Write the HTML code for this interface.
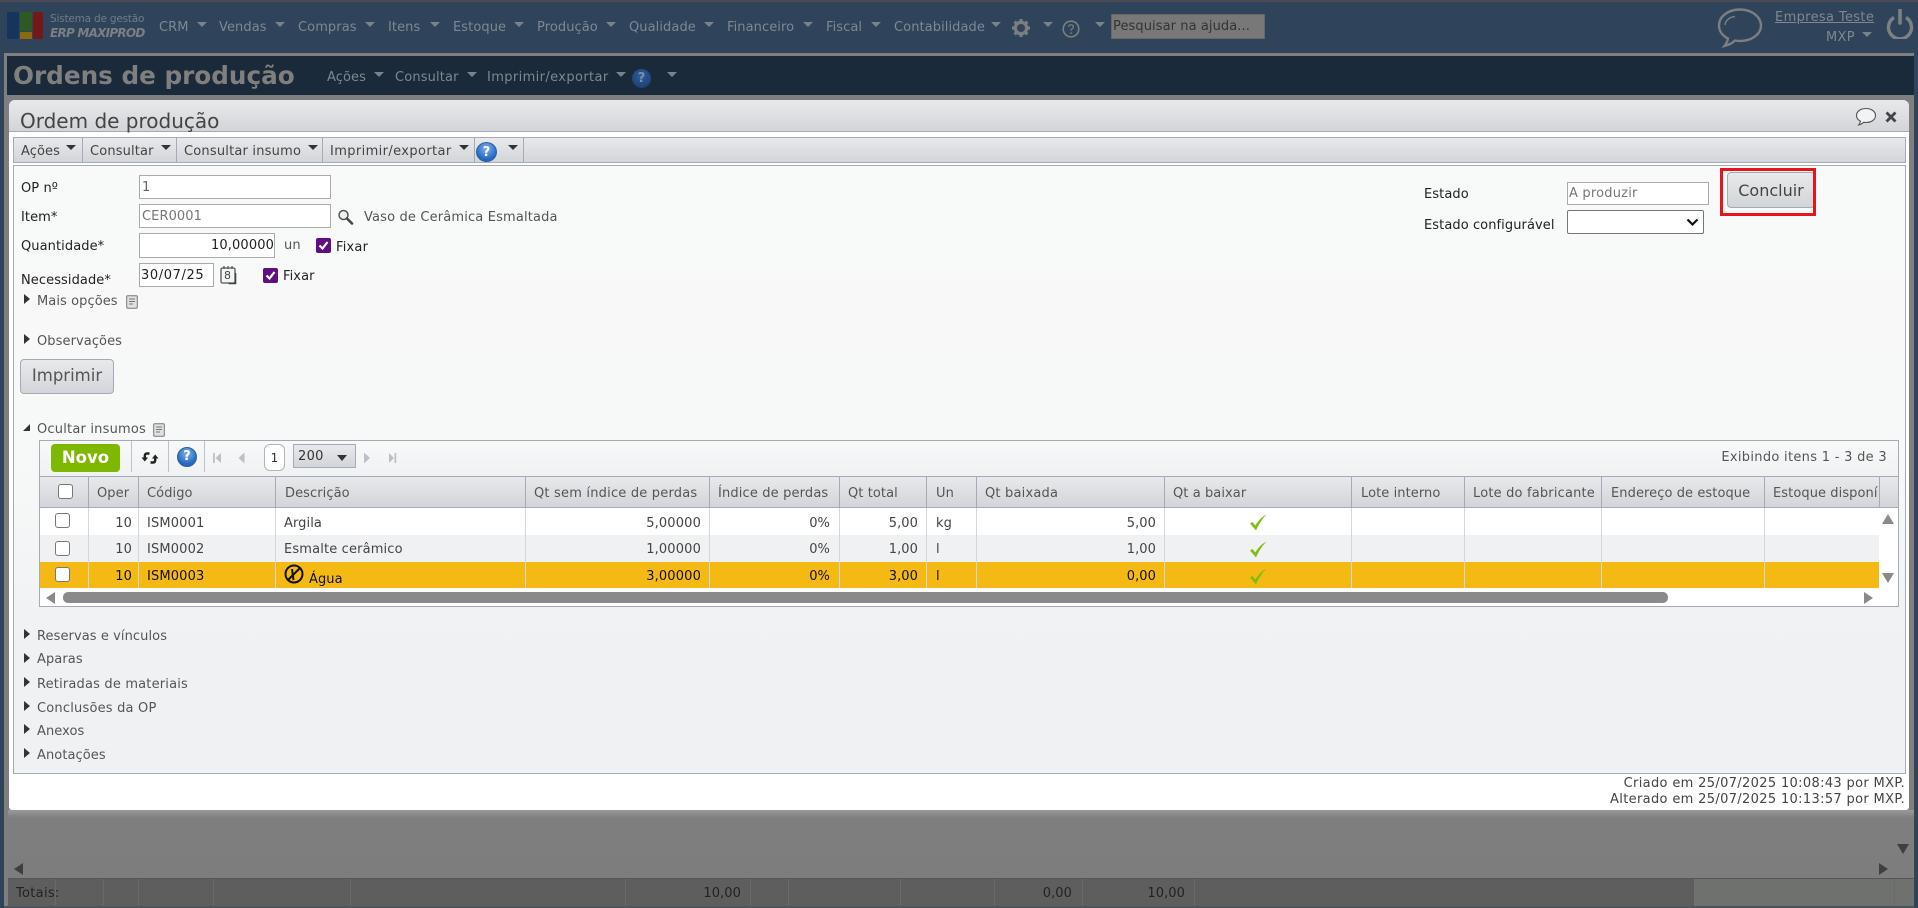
<!DOCTYPE html>
<html lang="pt"><head><meta charset="utf-8"><title>Ordem de produção</title>
<style>
html,body{margin:0;padding:0;width:1918px;height:908px;overflow:hidden;background:#2f435b}
body{position:relative;font:13px/16px "DejaVu Sans",sans-serif;color:#444;letter-spacing:.08px}
div,span,i,svg,input{position:absolute;box-sizing:border-box}
.t{white-space:nowrap;height:16px}
.m{color:#7d8892}
.d{width:0;height:0;border-left:5px solid transparent;border-right:5px solid transparent;border-top:5px solid #333}
.dm{border-top-color:#78838d}
.r{width:0;height:0;border-top:5px solid transparent;border-bottom:5px solid transparent;border-left:6px solid #333}
.v{width:1px;background:#a3abb8}
.h{color:#555}
.c{width:15px;height:15px;background:#fff;border:1px solid #777;border-radius:3px}
.g{background:linear-gradient(#e8e9eb,#d2d5d9)}
.cb{width:15px;height:15px;background:#5f0f82;border-radius:2px}
.tv{width:1px;background:#6a6a6a}
</style></head><body>

<!-- Background frame -->
<div style="left:0;top:0;width:1918px;height:2px;background:#4a4a55"></div>
<div style="left:4px;top:53px;width:1910px;height:855px;background:#7f7f7f"></div>
<div style="left:7px;top:56px;width:1907px;height:39px;background:#1a2a3a"></div>
<div style="left:8px;top:810px;width:1906px;height:68px;background:linear-gradient(#999,#7e7e7e 8px,#7d7d7d)"></div>

<!-- Logo -->
<div style="left:7px;top:12px;width:12px;height:27px;background:#17345c;border-radius:2px"></div>
<div style="left:20px;top:12px;width:12px;height:19px;background:#2c5a22"></div>
<div style="left:20px;top:32px;width:12px;height:7px;background:#8a6a10"></div>
<div style="left:33px;top:12px;width:10px;height:27px;background:#741818;border-radius:2px"></div>
<span class="t" style="left:50px;top:11px;font-size:10.500px;color:#717c86;letter-spacing:-.2px">Sistema de gestão</span>
<span class="t" style="left:50px;top:25px;font-size:12px;font-weight:bold;font-style:italic;color:#7a7f84;letter-spacing:-.75px">ERP MAXIPROD</span>

<!-- Main menu -->
<span class="t m" style="left:159px;top:20px">CRM</span><i class="d dm" style="left:197px;top:22px"></i>
<span class="t m" style="left:219px;top:20px">Vendas</span><i class="d dm" style="left:275px;top:22px"></i>
<span class="t m" style="left:298px;top:20px">Compras</span><i class="d dm" style="left:365px;top:22px"></i>
<span class="t m" style="left:388px;top:20px">Itens</span><i class="d dm" style="left:430px;top:22px"></i>
<span class="t m" style="left:453px;top:20px">Estoque</span><i class="d dm" style="left:514px;top:22px"></i>
<span class="t m" style="left:537px;top:20px">Produção</span><i class="d dm" style="left:606px;top:22px"></i>
<span class="t m" style="left:629px;top:20px">Qualidade</span><i class="d dm" style="left:704px;top:22px"></i>
<span class="t m" style="left:727px;top:20px">Financeiro</span><i class="d dm" style="left:803px;top:22px"></i>
<span class="t m" style="left:826px;top:20px">Fiscal</span><i class="d dm" style="left:871px;top:22px"></i>
<span class="t m" style="left:894px;top:20px">Contabilidade</span><i class="d dm" style="left:991px;top:22px"></i>
<svg style="left:1011px;top:18px" width="20" height="20" viewBox="0 0 20 20"><g stroke="#7a7f80" stroke-width="3.2"><path d="M10 1v18M1 10h18M3.6 3.6l12.8 12.8M16.4 3.6L3.6 16.4"/></g><circle cx="10" cy="10" r="6" fill="none" stroke="#7a7f80" stroke-width="2.6"/><circle cx="10" cy="10" r="4" fill="#2f435b"/></svg>
<i class="d dm" style="left:1043px;top:22px"></i>
<svg style="left:1062px;top:20px" width="18" height="18" viewBox="0 0 18 18"><circle cx="9" cy="9" r="7.8" fill="none" stroke="#7a7f80" stroke-width="1.6"/><path d="M6.6 7c0-3 4.8-3 4.8-.2 0 1.8-2.4 1.9-2.4 4" fill="none" stroke="#7a7f80" stroke-width="1.3"/><circle cx="9" cy="13.2" r=".9" fill="#7a7f80"/></svg>
<i class="d dm" style="left:1095px;top:22px"></i>
<div style="left:1111px;top:14px;width:154px;height:25px;background:#787878;border:1px solid #676767"></div>
<span class="t" style="left:1113px;top:19px;color:#333;font-size:13px">Pesquisar na ajuda...</span>

<!-- Top right -->
<svg style="left:1717px;top:8px" width="46" height="40" viewBox="0 0 46 40"><path d="M23 1.500C11 1.500 2 8.500 2 17.500c0 6 4 10.500 9 13-.5 3-2 5.500-3.500 7.500 4-1 8-3 10.500-5.500 2 .3 3.500.5 5 .5 12 0 21-7 21-15.500S35 1.500 23 1.500z" fill="none" stroke="#7b7f82" stroke-width="2.4"/><path d="M8 17c.5-5 5-8 10-8.500" fill="none" stroke="#7b7f82" stroke-width="1.4"/></svg>
<span class="t" style="left:1775px;top:10px;color:#82888d;text-decoration:underline;letter-spacing:.35px">Empresa Teste</span>
<span class="t m" style="left:1826px;top:30px;letter-spacing:.3px">MXP</span><i class="d dm" style="left:1862px;top:32px"></i>
<svg style="left:1886px;top:9px" width="28" height="30" viewBox="0 0 28 30"><path d="M8 8.500a11.500 11.500 0 1 0 12 0" fill="none" stroke="#7d8184" stroke-width="3.400"/><path d="M14 1v13" stroke="#7d8184" stroke-width="3.600" stroke-linecap="round"/></svg>

<!-- Page title -->
<span class="t" style="left:13px;top:61px;height:30px;line-height:30px;font-size:24.7px;font-weight:bold;color:#7f7f7f;letter-spacing:0">Ordens de produção</span>
<span class="t m" style="left:327px;top:70px">Ações</span><i class="d dm" style="left:374px;top:72px"></i>
<span class="t m" style="left:395px;top:70px;letter-spacing:.15px">Consultar</span><i class="d dm" style="left:467px;top:72px"></i>
<span class="t m" style="left:487px;top:70px;letter-spacing:.38px">Imprimir/exportar</span><i class="d dm" style="left:616px;top:72px"></i>
<div style="left:632px;top:69px;width:19px;height:19px;border-radius:50%;background:radial-gradient(circle at 50% 35%,#2f5d9a,#173a68)"></div>
<span class="t" style="left:632px;top:71px;width:19px;text-align:center;color:#7d8fa6;font-weight:bold;font-size:13px">?</span>
<i class="d dm" style="left:667px;top:72px"></i>

<!-- Totals bar -->
<div style="left:8px;top:878px;width:1686px;height:28px;background:#5e5e5e;border-top:1px solid #55555c"></div>
<div style="left:1694px;top:878px;width:220px;height:28px;background:#6f716f;border-top:1px solid #55555c"></div>
<div style="left:4px;top:906px;width:1910px;height:2px;background:#4a5560"></div>
<div class="tv" style="left:55px;top:879px;height:27px"></div><div class="tv" style="left:103px;top:879px;height:27px"></div><div class="tv" style="left:138px;top:879px;height:27px"></div><div class="tv" style="left:213px;top:879px;height:27px"></div><div class="tv" style="left:350px;top:879px;height:27px"></div><div class="tv" style="left:625px;top:879px;height:27px"></div><div class="tv" style="left:750px;top:879px;height:27px"></div><div class="tv" style="left:788px;top:879px;height:27px"></div><div class="tv" style="left:900px;top:879px;height:27px"></div><div class="tv" style="left:994px;top:879px;height:27px"></div><div class="tv" style="left:1082px;top:879px;height:27px"></div><div class="tv" style="left:1194px;top:879px;height:27px"></div><div class="tv" style="left:1894px;top:879px;height:27px"></div>
<span class="t" style="left:16px;top:886px;color:#222;letter-spacing:.3px">Totais:</span>
<span class="t" style="right:1177px;top:886px;color:#222">10,00</span>
<span class="t" style="right:846px;top:886px;color:#222">0,00</span>
<span class="t" style="right:733px;top:886px;color:#222">10,00</span>
<i style="left:14px;top:863px;width:0;height:0;border-top:6px solid transparent;border-bottom:6px solid transparent;border-right:9px solid #3f3f3f"></i>
<i style="left:1879px;top:863px;width:0;height:0;border-top:6px solid transparent;border-bottom:6px solid transparent;border-left:9px solid #3f3f3f"></i>
<i style="left:1897px;top:844px;width:0;height:0;border-left:6.500px solid transparent;border-right:6.500px solid transparent;border-top:10px solid #3f3f3f"></i>

<!-- Modal -->
<div style="left:9px;top:100px;width:1900px;height:710px;background:#fff;border-radius:6px 6px 3px 3px"></div>
<div class="g" style="left:9px;top:100px;width:1900px;height:32px;border-bottom:1px solid #a3abb8;border-radius:6px 6px 0 0"></div>
<span class="t" style="left:20px;top:108px;height:26px;line-height:26px;font-size:20px;color:#444;letter-spacing:0">Ordem de produção</span>
<svg style="left:1855px;top:107px" width="22" height="20" viewBox="0 0 22 20"><path d="M11 1.500C5.500 1.500 1.500 4.500 1.500 8.500c0 2.500 1.700 4.500 4 5.700-.2 1.400-1 2.800-1.800 3.800 2-.5 3.800-1.500 5-2.700.8.100 1.500.200 2.300.200 5.500 0 9.500-3 9.500-7S16.500 1.500 11 1.500z" fill="#f2f3f4" stroke="#555" stroke-width="1.100"/></svg>
<svg style="left:1885px;top:111px" width="12" height="12" viewBox="0 0 12 12"><path d="M1.500 1.500l9 9M10.500 1.500l-9 9" stroke="#444" stroke-width="2.800"/></svg>

<!-- Toolbar -->
<div class="g" style="left:13px;top:137px;width:1893px;height:26px;border:1px solid #a3abb8"></div>
<span class="t" style="left:21px;top:144px">Ações</span><i class="d" style="left:66px;top:145px"></i><div class="v" style="left:82px;top:138px;height:24px"></div>
<span class="t" style="left:90px;top:144px;letter-spacing:.15px">Consultar</span><i class="d" style="left:161px;top:145px"></i><div class="v" style="left:176px;top:138px;height:24px"></div>
<span class="t" style="left:184px;top:144px;letter-spacing:.2px">Consultar insumo</span><i class="d" style="left:308px;top:145px"></i><div class="v" style="left:322px;top:138px;height:24px"></div>
<span class="t" style="left:330px;top:144px;letter-spacing:.38px">Imprimir/exportar</span><i class="d" style="left:459px;top:145px"></i><div class="v" style="left:474px;top:138px;height:24px"></div>
<div style="left:476px;top:142px;width:21px;height:20px;border-radius:50%;background:radial-gradient(circle at 50% 30%,#7fb2ee,#2467be 70%);border:1px solid #2a5fa8"></div>
<span class="t" style="left:476px;top:145px;width:21px;text-align:center;color:#fff;font-weight:bold">?</span>
<i class="d" style="left:508px;top:145px"></i><div class="v" style="left:523px;top:138px;height:24px"></div>

<!-- Panel -->
<div style="left:13px;top:165px;width:1893px;height:609px;border:1px solid #a3abb8;background:linear-gradient(#f8f9f9,#f7f8f8 300px,#f0f1f3 480px)"></div>

<!-- Form -->
<span class="t" style="left:21px;top:181px;color:#222">OP nº</span>
<div style="left:139px;top:175px;width:192px;height:24px;background:#fff;border:1px solid #aaa"></div>
<span class="t" style="left:142px;top:180px;color:#666">1</span>
<span class="t" style="left:21px;top:210px;color:#222">Item*</span>
<div style="left:139px;top:204px;width:192px;height:24px;background:#fff;border:1px solid #aaa"></div>
<span class="t" style="left:142px;top:209px;color:#777">CER0001</span>
<svg style="left:337px;top:209px" width="17" height="16" viewBox="0 0 17 16"><circle cx="6.500" cy="6" r="4.500" fill="#eef1f3" stroke="#555" stroke-width="1.500"/><path d="M10 9.500l5 5" stroke="#444" stroke-width="2.600" stroke-linecap="round"/></svg>
<span class="t" style="left:364px;top:210px;color:#555;letter-spacing:.16px">Vaso de Cerâmica Esmaltada</span>
<span class="t" style="left:21px;top:239px;color:#222">Quantidade*</span>
<div style="left:139px;top:233px;width:136px;height:25px;background:#fff;border:1px solid #aaa"></div>
<span class="t" style="right:1644px;top:238px;color:#222;letter-spacing:.12px">10,00000</span>
<span class="t" style="left:284px;top:238px;color:#555">un</span>
<div class="cb" style="left:316px;top:238px"></div>
<svg style="left:316px;top:238px" width="15" height="15" viewBox="0 0 15 15"><path d="M3.500 7.500l3 3 5-6.500" fill="none" stroke="#fff" stroke-width="2.200"/></svg>
<span class="t" style="left:336px;top:240px;color:#222;letter-spacing:.2px">Fixar</span>
<span class="t" style="left:21px;top:273px;color:#222">Necessidade*</span>
<div style="left:139px;top:263px;width:75px;height:24px;background:#fff;border:1px solid #aaa"></div>
<span class="t" style="left:141px;top:268px;color:#222;letter-spacing:.6px">30/07/25</span>
<svg style="left:220px;top:265px" width="17" height="20" viewBox="0 0 17 20"><rect x="1" y="3" width="14" height="15" rx="1.500" fill="#f3f4f4" stroke="#555" stroke-width="1.300"/><path d="M4 1v3M8 1v3M12 1v3" stroke="#555" stroke-width="1.200"/><path d="M15.500 8v10.500h-7" fill="none" stroke="#444" stroke-width="1.600"/></svg>
<span class="t" style="left:224px;top:269px;font-size:11px;line-height:14px;height:14px;color:#444">8</span>
<div class="cb" style="left:263px;top:268px"></div>
<svg style="left:263px;top:268px" width="15" height="15" viewBox="0 0 15 15"><path d="M3.500 7.500l3 3 5-6.500" fill="none" stroke="#fff" stroke-width="2.200"/></svg>
<span class="t" style="left:283px;top:269px;color:#222">Fixar</span>
<i class="r" style="left:24px;top:294px"></i>
<span class="t" style="left:37px;top:294px;color:#555">Mais opções</span>
<svg style="left:126px;top:295px" width="12" height="14" viewBox="0 0 12 14"><rect x=".7" y=".7" width="10.600" height="12.600" rx="1" fill="#dfe1e3" stroke="#777"/><path d="M3 4h6M3 6.500h6M3 9h4" stroke="#777"/></svg>
<i class="r" style="left:24px;top:334px"></i>
<span class="t" style="left:37px;top:334px;color:#555">Observações</span>
<div class="g" style="left:20px;top:359px;width:94px;height:35px;border:1px solid #a3abb8;border-radius:4px"></div>
<span class="t" style="left:20px;top:366px;width:94px;height:20px;line-height:20px;text-align:center;font-size:16.500px;color:#555;letter-spacing:0">Imprimir</span>

<!-- Right form -->
<span class="t" style="left:1424px;top:187px;color:#222">Estado</span>
<div style="left:1567px;top:182px;width:142px;height:23px;background:#fff;border:1px solid #aaa"></div>
<span class="t" style="left:1569px;top:186px;color:#777;letter-spacing:.2px">A produzir</span>
<span class="t" style="left:1424px;top:218px;color:#222">Estado configurável</span>
<div style="left:1567px;top:210px;width:137px;height:24px;background:#fff;border:1px solid #767676;border-radius:2px"></div>
<svg style="left:1686px;top:218px" width="13" height="9" viewBox="0 0 13 9"><path d="M1.500 1.500l5 5 5-5" fill="none" stroke="#111" stroke-width="2.200"/></svg>
<div class="g" style="left:1727px;top:172px;width:88px;height:36px;border:1px solid #a3abb8;border-radius:4px"></div>
<span class="t" style="left:1727px;top:181px;width:88px;height:20px;line-height:20px;text-align:center;font-size:16px;color:#444;letter-spacing:0">Concluir</span>
<div style="left:1720px;top:168px;width:96px;height:48px;border:3px solid #e8141c"></div>

<!-- Insumos -->
<i style="left:23px;top:424px;width:0;height:0;border-bottom:7px solid #333;border-left:7px solid transparent"></i>
<span class="t" style="left:37px;top:422px;color:#555;letter-spacing:.2px">Ocultar insumos</span>
<svg style="left:153px;top:423px" width="12" height="14" viewBox="0 0 12 14"><rect x=".7" y=".7" width="10.600" height="12.600" rx="1" fill="#dfe1e3" stroke="#777"/><path d="M3 4h6M3 6.500h6M3 9h4" stroke="#777"/></svg>

<!-- Grid -->
<div style="left:39px;top:440px;width:1860px;height:167px;background:#fff;border:1px solid #a3abb8"></div>
<div style="left:40px;top:441px;width:1858px;height:35px;background:linear-gradient(#f8f9f9,#f0f1f3)"></div>
<div style="left:51px;top:444px;width:69px;height:28px;background:#7fb800;border-radius:4px"></div>
<span class="t" style="left:51px;top:448px;width:69px;height:20px;line-height:20px;text-align:center;font-size:16.500px;font-weight:bold;color:#fff;letter-spacing:0">Novo</span>
<div class="v" style="left:131px;top:441px;height:31px;background:#bcc2ca"></div>
<svg style="left:141px;top:451px" width="18" height="14" viewBox="0 0 18 14"><path d="M8.500 2.500H6C4.500 2.500 3.800 3.500 3.800 5v2" fill="none" stroke="#222" stroke-width="2.400"/><path d="M.5 6.500h6.600L3.800 10.500z" fill="#222"/><path d="M9.500 11.500H12c1.500 0 2.200-1 2.200-2.500V7" fill="none" stroke="#222" stroke-width="2.400"/><path d="M10.900 7.500h6.600L14.200 3.500z" fill="#222"/></svg>
<div class="v" style="left:168px;top:441px;height:31px;background:#bcc2ca"></div>
<div style="left:177px;top:447px;width:20px;height:20px;border-radius:50%;background:radial-gradient(circle at 50% 30%,#7fb2ee,#2467be 70%);border:1px solid #2a5fa8"></div>
<span class="t" style="left:177px;top:449px;width:20px;text-align:center;color:#fff;font-weight:bold">?</span>
<div class="v" style="left:204px;top:441px;height:31px;background:#bcc2ca"></div>
<svg style="left:212px;top:452px" width="186" height="12" viewBox="0 0 186 12"><g fill="#bcc1c7"><rect x="1" y="1" width="1.800" height="10"/><path d="M3.500 6L9 1v10zM26.500 6l6-5.500v11zM152 .5l6 5.500-6 5.500zM177 1l5 5-5 5z"/><rect x="182.500" y="1" width="1.800" height="10"/></g></svg>
<div style="left:264px;top:444px;width:21px;height:27px;background:#fff;border:1px solid #b0b5bc;border-radius:6px"></div>
<span class="t" style="left:264px;top:450px;width:21px;text-align:center;color:#333;font-size:12px">1</span>
<div class="g" style="left:293px;top:444px;width:63px;height:24px;border:1px solid #a3abb8"></div>
<span class="t" style="left:298px;top:449px;color:#333;letter-spacing:.3px">200</span>
<i class="d" style="left:337px;top:455px;border-left-width:5.500px;border-right-width:5.500px;border-top-width:6px"></i>
<span class="t" style="right:31px;top:450px;color:#555;letter-spacing:.3px">Exibindo itens 1 - 3 de 3</span>

<!-- Grid header -->
<div class="g" style="left:40px;top:476px;width:1858px;height:32px;border-top:1px solid #a3abb8;border-bottom:1px solid #a3abb8"></div>
<div class="c" style="left:58px;top:484px"></div>
<span class="t h" style="left:97px;top:486px">Oper</span>
<span class="t h" style="left:147px;top:486px">Código</span>
<span class="t h" style="left:285px;top:486px">Descrição</span>
<span class="t h" style="left:534px;top:486px;letter-spacing:.2px">Qt sem índice de perdas</span>
<span class="t h" style="left:718px;top:486px;letter-spacing:.15px">Índice de perdas</span>
<span class="t h" style="left:848px;top:486px">Qt total</span>
<span class="t h" style="left:936px;top:486px">Un</span>
<span class="t h" style="left:985px;top:486px;letter-spacing:.2px">Qt baixada</span>
<span class="t h" style="left:1173px;top:486px">Qt a baixar</span>
<span class="t h" style="left:1361px;top:486px">Lote interno</span>
<span class="t h" style="left:1473px;top:486px;letter-spacing:.18px">Lote do fabricante</span>
<span class="t h" style="left:1611px;top:486px">Endereço de estoque</span>
<span class="t h" style="left:1773px;top:486px;width:105px;overflow:hidden">Estoque disponível</span>

<!-- Rows -->
<div style="left:40px;top:535px;width:1839px;height:27px;background:#f0f1f3"></div>
<div style="left:40px;top:562px;width:1839px;height:26px;background:#f5b914"></div>

<!-- Column lines -->
<div class="v" style="left:88px;top:477px;height:30px"></div><div class="v" style="left:138px;top:477px;height:30px"></div><div class="v" style="left:275px;top:477px;height:30px"></div><div class="v" style="left:525px;top:477px;height:30px"></div><div class="v" style="left:709px;top:477px;height:30px"></div><div class="v" style="left:839px;top:477px;height:30px"></div><div class="v" style="left:926px;top:477px;height:30px"></div><div class="v" style="left:976px;top:477px;height:30px"></div><div class="v" style="left:1164px;top:477px;height:30px"></div><div class="v" style="left:1351px;top:477px;height:30px"></div><div class="v" style="left:1464px;top:477px;height:30px"></div><div class="v" style="left:1601px;top:477px;height:30px"></div><div class="v" style="left:1764px;top:477px;height:30px"></div><div class="v" style="left:1879px;top:477px;height:30px"></div>
<div class="v" style="left:88px;top:508px;height:80px;background:#d3d6db"></div><div class="v" style="left:138px;top:508px;height:80px;background:#d3d6db"></div><div class="v" style="left:275px;top:508px;height:80px;background:#d3d6db"></div><div class="v" style="left:525px;top:508px;height:80px;background:#d3d6db"></div><div class="v" style="left:709px;top:508px;height:80px;background:#d3d6db"></div><div class="v" style="left:839px;top:508px;height:80px;background:#d3d6db"></div><div class="v" style="left:926px;top:508px;height:80px;background:#d3d6db"></div><div class="v" style="left:976px;top:508px;height:80px;background:#d3d6db"></div><div class="v" style="left:1164px;top:508px;height:80px;background:#d3d6db"></div><div class="v" style="left:1351px;top:508px;height:80px;background:#d3d6db"></div><div class="v" style="left:1464px;top:508px;height:80px;background:#d3d6db"></div><div class="v" style="left:1601px;top:508px;height:80px;background:#d3d6db"></div><div class="v" style="left:1764px;top:508px;height:80px;background:#d3d6db"></div>

<!-- Row 1 -->
<div class="c" style="left:55px;top:513px"></div>
<span class="t" style="right:1786px;top:516px">10</span>
<span class="t" style="left:147px;top:516px;letter-spacing:.15px">ISM0001</span>
<span class="t" style="left:284px;top:516px">Argila</span>
<span class="t" style="right:1217px;top:516px;letter-spacing:.15px">5,00000</span>
<span class="t" style="right:1088px;top:516px">0%</span>
<span class="t" style="right:1000px;top:516px">5,00</span>
<span class="t" style="left:936px;top:516px">kg</span>
<span class="t" style="right:762px;top:516px">5,00</span>
<!-- Row 2 -->
<div class="c" style="left:55px;top:541px"></div>
<span class="t" style="right:1786px;top:542px">10</span>
<span class="t" style="left:147px;top:542px;letter-spacing:.15px">ISM0002</span>
<span class="t" style="left:284px;top:542px;letter-spacing:.15px">Esmalte cerâmico</span>
<span class="t" style="right:1217px;top:542px;letter-spacing:.15px">1,00000</span>
<span class="t" style="right:1088px;top:542px">0%</span>
<span class="t" style="right:1000px;top:542px">1,00</span>
<span class="t" style="left:936px;top:542px">l</span>
<span class="t" style="right:762px;top:542px">1,00</span>
<!-- Row 3 -->
<div class="c" style="left:55px;top:567px"></div>
<span class="t" style="right:1786px;top:569px;color:#111">10</span>
<span class="t" style="left:147px;top:569px;color:#111;letter-spacing:.15px">ISM0003</span>
<svg style="left:284px;top:564px" width="20" height="20" viewBox="0 0 20 20"><circle cx="10" cy="10" r="8.500" fill="none" stroke="#111" stroke-width="2"/><path d="M4 16L16 4" stroke="#111" stroke-width="2"/><path d="M8 5l1.500 11" stroke="#111" stroke-width="2"/></svg>
<span class="t" style="left:309px;top:572px;color:#111">Água</span>
<span class="t" style="right:1217px;top:569px;color:#111;letter-spacing:.15px">3,00000</span>
<span class="t" style="right:1088px;top:569px;color:#111">0%</span>
<span class="t" style="right:1000px;top:569px;color:#111">3,00</span>
<span class="t" style="left:936px;top:569px;color:#111">l</span>
<span class="t" style="right:762px;top:569px;color:#111">0,00</span>
<!-- Checks -->
<svg style="left:1249px;top:514px" width="18" height="17" viewBox="0 0 18 17"><path d="M1 9.500l2.500-1.500 2.800 3.500C9 7 12.500 3 17.500.5 13 5 9.500 10.500 7 16.500z" fill="#84bb10"/></svg>
<svg style="left:1249px;top:541px" width="18" height="17" viewBox="0 0 18 17"><path d="M1 9.500l2.500-1.500 2.800 3.500C9 7 12.500 3 17.500.5 13 5 9.500 10.500 7 16.500z" fill="#84bb10"/></svg>
<svg style="left:1249px;top:568px" width="18" height="17" viewBox="0 0 18 17"><path d="M1 9.500l2.500-1.500 2.800 3.500C9 7 12.500 3 17.500.5 13 5 9.500 10.500 7 16.500z" fill="#84bb10"/></svg>

<!-- Scrollbars -->
<i style="left:1882px;top:514px;width:0;height:0;border-left:6.500px solid transparent;border-right:6.500px solid transparent;border-bottom:10px solid #8a8a8a"></i>
<i style="left:1882px;top:573px;width:0;height:0;border-left:6.500px solid transparent;border-right:6.500px solid transparent;border-top:10px solid #8a8a8a"></i>
<i style="left:46px;top:592px;width:0;height:0;border-top:6px solid transparent;border-bottom:6px solid transparent;border-right:9px solid #8a8a8a"></i>
<div style="left:63px;top:592px;width:1605px;height:11px;background:#8a8a8a;border-radius:5px"></div>
<i style="left:1864px;top:592px;width:0;height:0;border-top:6px solid transparent;border-bottom:6px solid transparent;border-left:9px solid #8a8a8a"></i>

<!-- Sections -->
<i class="r" style="left:24px;top:629px"></i><span class="t" style="left:37px;top:629px;color:#555">Reservas e vínculos</span>
<i class="r" style="left:24px;top:653px"></i><span class="t" style="left:37px;top:652px;color:#555">Aparas</span>
<i class="r" style="left:24px;top:677px"></i><span class="t" style="left:37px;top:677px;color:#555;letter-spacing:.18px">Retiradas de materiais</span>
<i class="r" style="left:24px;top:701px"></i><span class="t" style="left:37px;top:701px;color:#555;letter-spacing:.2px">Conclusões da OP</span>
<i class="r" style="left:24px;top:724px"></i><span class="t" style="left:37px;top:724px;color:#555">Anexos</span>
<i class="r" style="left:24px;top:748px"></i><span class="t" style="left:37px;top:748px;color:#555">Anotações</span>

<!-- Footer -->
<span class="t" style="right:13px;top:776px;color:#444;letter-spacing:.34px">Criado em 25/07/2025 10:08:43 por MXP.</span>
<span class="t" style="right:13px;top:792px;color:#444;letter-spacing:.34px">Alterado em 25/07/2025 10:13:57 por MXP.</span>
</body></html>
